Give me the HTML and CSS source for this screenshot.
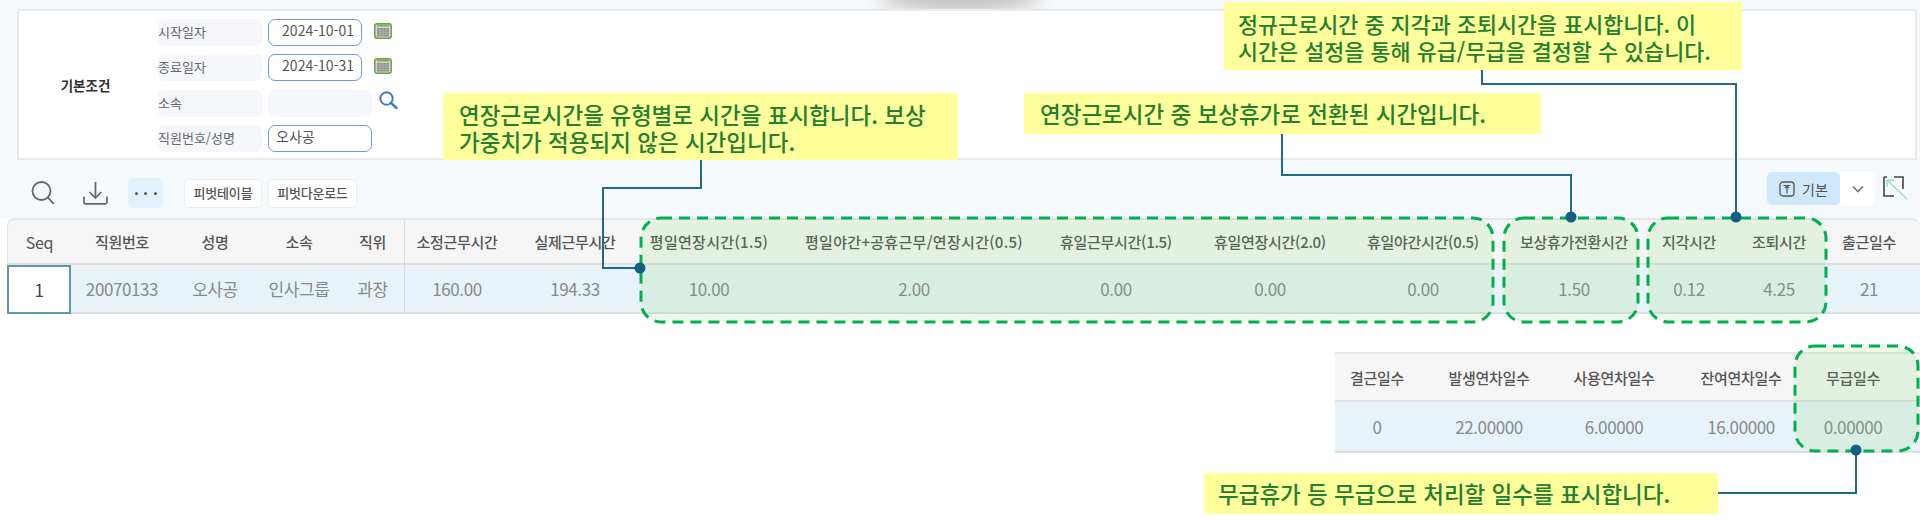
FILE: index.html
```html
<!DOCTYPE html>
<html lang="ko">
<head>
<meta charset="utf-8">
<title>근태 집계</title>
<link rel="stylesheet" href="styles.css">
</head>
<body>
<div class="page">
  <div class="top">
    <div class="top-shadow"></div>
    <section class="panel">
      <div class="panel-title">기본조건</div>
      <div class="form">
        <div class="field"><span class="label">시작일자</span><span class="input date">2024-10-01</span>
          <svg class="cal" viewBox="0 0 18 16"><rect x="0.75" y="0.75" width="16.5" height="14.5" rx="2.5" fill="#cfdcc0" stroke="#6fa04a" stroke-width="1.5"/><rect x="3" y="1.5" width="12" height="2" fill="#7fa860"/><rect x="3" y="5" width="12" height="8.5" fill="#8c8c8c"/><path d="M3 7h12M3 9.2h12M3 11.4h12M6 5v8.5M9 5v8.5M12 5v8.5" stroke="#c4c4c4" stroke-width=".6"/></svg></div>
        <div class="field"><span class="label">종료일자</span><span class="input date">2024-10-31</span>
          <svg class="cal" viewBox="0 0 18 16"><rect x="0.75" y="0.75" width="16.5" height="14.5" rx="2.5" fill="#cfdcc0" stroke="#6fa04a" stroke-width="1.5"/><rect x="3" y="1.5" width="12" height="2" fill="#7fa860"/><rect x="3" y="5" width="12" height="8.5" fill="#8c8c8c"/><path d="M3 7h12M3 9.2h12M3 11.4h12M6 5v8.5M9 5v8.5M12 5v8.5" stroke="#c4c4c4" stroke-width=".6"/></svg></div>
        <div class="field"><span class="label">소속</span><span class="input wide empty"></span>
          <svg class="find" viewBox="0 0 20 20"><circle cx="8.5" cy="8.5" r="6.2" fill="none" stroke="#3f78c9" stroke-width="2"/><path d="M13 13l5.5 5" stroke="#3f78c9" stroke-width="2.4" stroke-linecap="round"/></svg></div>
        <div class="field"><span class="label">직원번호/성명</span><span class="input wide">오사공</span></div>
      </div>
    </section>
    <div class="toolbar">
      <div class="tools">
        <svg class="tool-search" viewBox="0 0 24 24"><circle cx="10.5" cy="10" r="9" fill="none" stroke="#666" stroke-width="1.8"/><path d="M16.8 16.5l6 6.3" stroke="#666" stroke-width="1.8"/></svg>
        <svg class="tool-down" viewBox="0 0 25 24"><path d="M12.5 1v15.5M6.5 11l6 6 6-6" fill="none" stroke="#666" stroke-width="1.7"/><path d="M1 15.5V21a1.8 1.8 0 0 0 1.8 1.8h19.4A1.8 1.8 0 0 0 24 21v-5.5" fill="none" stroke="#666" stroke-width="1.7"/></svg>
        <span class="more"><i></i><i></i><i></i></span>
        <span class="btn">피벗테이블</span>
        <span class="btn second">피벗다운로드</span>
      </div>
      <div class="tools-right">
        <span class="basic"><svg viewBox="0 0 16 16"><rect x="1" y="1" width="14" height="14" rx="3" fill="none" stroke="#555" stroke-width="1.3"/><path d="M4.5 4.5h7M8 4.5v8M6 7l2-2 2 2" fill="none" stroke="#555" stroke-width="1.2"/></svg>기본</span>
        <span class="chev-box"><svg class="chev" viewBox="0 0 12 8"><path d="M1 1.5l5 5 5-5" fill="none" stroke="#777" stroke-width="1.7"/></svg></span>
        <svg class="expand" viewBox="0 0 25 24"><path d="M11 1H20V13M1 1H4M1 1V20H11" fill="none" stroke="#444" stroke-width="1.6"/><path d="M4 4l20 19M4 4v7M4 4h7" fill="none" stroke="#8fe0b8" stroke-width="1.3"/></svg>
      </div>
    </div>
  </div>
  <div class="sheet main">
    <div class="hd seq-hd">Seq</div><div class="hd">직원번호</div><div class="hd">성명</div><div class="hd">소속</div><div class="hd split">직위</div><div class="hd">소정근무시간</div><div class="hd">실제근무시간</div><div class="hd loose">평일연장시간(1.5)</div><div class="hd loose">평일야간+공휴근무/연장시간(0.5)</div><div class="hd">휴일근무시간(1.5)</div><div class="hd">휴일연장시간(2.0)</div><div class="hd">휴일야간시간(0.5)</div><div class="hd">보상휴가전환시간</div><div class="hd">지각시간</div><div class="hd">조퇴시간</div><div class="hd">출근일수</div><div class="hd end"></div>
    <div class="td seq">1</div><div class="td">20070133</div><div class="td">오사공</div><div class="td">인사그룹</div><div class="td split">과장</div><div class="td">160.00</div><div class="td">194.33</div><div class="td">10.00</div><div class="td">2.00</div><div class="td">0.00</div><div class="td">0.00</div><div class="td">0.00</div><div class="td">1.50</div><div class="td">0.12</div><div class="td">4.25</div><div class="td">21</div><div class="td"></div>
  </div>
  <div class="sheet extra">
    <div class="hd">결근일수</div><div class="hd">발생연차일수</div><div class="hd">사용연차일수</div><div class="hd">잔여연차일수</div><div class="hd">무급일수</div><div class="hd"></div>
    <div class="td">0</div><div class="td">22.00000</div><div class="td">6.00000</div><div class="td">16.00000</div><div class="td">0.00000</div><div class="td"></div>
  </div>

  <svg class="overlay" viewBox="0 0 1920 520" aria-hidden="true">
    <g class="zone">
      <rect x="641" y="218" width="852" height="104" rx="20"/>
      <rect x="1504" y="218" width="134" height="104" rx="20"/>
      <rect x="1648" y="218" width="178" height="104" rx="20"/>
      <rect x="1795" y="346" width="123" height="105" rx="20"/>
    </g>
    <g class="wire">
      <path d="M701 160V188H603V268H640"/>
      <path d="M1282 134V175H1571V217"/>
      <path d="M1482 70V84H1736V217"/>
      <path d="M1718 493H1856V450"/>
    </g>
    <g class="pin">
      <circle cx="640" cy="268" r="5.5"/>
      <circle cx="1571" cy="217" r="5.5"/>
      <circle cx="1736" cy="217" r="5.5"/>
      <circle cx="1856" cy="450" r="5.5"/>
    </g>
  </svg>

  <div class="note note-a"><p class="line">연장근로시간을 유형별로 시간을 표시합니다. 보상</p><p class="line">가중치가 적용되지 않은 시간입니다.</p></div>
  <div class="note note-b"><p class="line">연장근로시간 중 보상휴가로 전환된 시간입니다.</p></div>
  <div class="note note-c"><p class="line">정규근로시간 중 지각과 조퇴시간을 표시합니다. 이</p><p class="line">시간은 설정을 통해 유급/무급을 결정할 수 있습니다.</p></div>
  <div class="note note-d"><p class="line">무급휴가 등 무급으로 처리할 일수를 표시합니다.</p></div>
</div>
</body>
</html>
```
FILE: styles.css
```css
* { box-sizing: border-box; }
html, body { margin: 0; padding: 0; background: #fff; }
body { font-family: "Noto Sans CJK KR", "Noto Sans", sans-serif; color: #555; }
.page { position: relative; width: 1920px; height: 520px; overflow: hidden; }

.top { position: relative; height: 218px; padding: 9px 0 0 17px; background: #f6f9fc; }
.top-shadow { position: absolute; left: 880px; top: -14px; width: 160px; height: 24px; background: #bbb; filter: blur(9px); border-radius: 50%; }

.panel { position: relative; display: flex; align-items: center; height: 151px; width: 1900px; background: #fff; border: 2px solid #e9e9e9; }
.panel-title { width: 139px; padding-right: 6px; text-align: center; font-size: 13.5px; font-weight: 700; color: #333; }
.form { display: grid; row-gap: 8.3px; padding-top: 2px; }
.field { display: flex; align-items: center; height: 27px; }
.label { width: 104px; height: 27px; margin-right: 6px; background: #f5f7fb; border-radius: 6px; font-size: 13px; line-height: 26px; color: #666; }
.input { display: block; width: 94px; height: 27px; border: 1.5px solid #7396dc; border-radius: 7px; background: #fff; font-size: 14px; line-height: 21px; color: #555; padding: 0 7px; }
.date { text-align: right; }
.wide { width: 104px; }
.empty { border: 0; background: #f5f7fb; }
.cal { width: 18px; height: 16px; margin-left: 12px; margin-top: -4px; }
.find { width: 20px; height: 20px; margin-left: 6px; margin-top: -6px; }

.toolbar { display: flex; align-items: flex-start; justify-content: space-between; height: 58px; padding-top: 18px; }
.tools { display: flex; align-items: center; height: 30px; padding-left: 14px; }
.tool-search { width: 24px; height: 24px; }
.tool-down { width: 25px; height: 24px; margin-left: 28px; }
.more { display: flex; align-items: center; justify-content: center; gap: 6.5px; width: 35px; height: 30px; margin-left: 20px; background: #e2f1fb; border-radius: 5px; }
.more i { width: 3px; height: 3px; border-radius: 50%; background: #555; }
.btn { display: block; height: 29px; width: 78px; margin-left: 21px; background: #fff; border: 1px solid #eceef0; border-radius: 5px; font-size: 13px; font-weight: 500; line-height: 26px; text-align: center; color: #555; letter-spacing: -.2px; }
.btn.second { width: 89px; margin-left: 6px; }
.tools-right { display: flex; align-items: center; height: 33px; margin-top: -6px; }
.basic { display: flex; align-items: center; justify-content: center; gap: 7px; width: 73px; height: 33px; background: #cfe9fb; border-radius: 5px; font-size: 14px; color: #555; }
.basic svg { width: 16px; height: 16px; }
.chev-box { display: flex; align-items: center; justify-content: center; width: 35px; height: 33px; background: #fff; border-radius: 0 6px 6px 0; }
.chev { width: 12px; height: 8px; }
.expand { width: 25px; height: 24px; margin-left: 8px; margin-right: 12px; margin-top: -2px; }

.sheet { display: grid; grid-template-rows: 47px 49px; font-size: 15px; letter-spacing: -.3px; }
.main { grid-template-columns: 64px 102px 84px 84px 64px 104px 132px 136px 274px 130px 178px 128px 174px 56px 124px 56px 23px; margin-left: 7px; }
.extra { grid-template-columns: 84px 140px 110px 144px 80px 27px; width: 585px; margin: 38px 0 0 auto; grid-template-rows: 50px 51px; }
.hd { display: flex; align-items: center; justify-content: center; background: #f6f6f6; border-top: 2px solid #e6e6e6; border-bottom: 2px solid #e0e0e0; color: #555; font-weight: 500; white-space: nowrap; }
.td { display: flex; align-items: center; justify-content: center; background: #e8f3f9; border-bottom: 2px solid #dcdfe2; color: #888; font-size: 17px; letter-spacing: -.4px; white-space: nowrap; }
.seq-hd { border-top-left-radius: 8px; border-left: 1px solid #e6e6e6; font-size: 16px; font-weight: 400; }
.end { border-top-right-radius: 8px; }
.loose { letter-spacing: .3px; }
.split { border-right: 1px solid #d8dde0; }
.seq { background: #fff; border: 2px solid #5b9bad; color: #444; }

.overlay { position: absolute; left: 0; top: 0; width: 1920px; height: 520px; }
.zone rect { fill: #70d050; fill-opacity: .13; stroke: #00b050; stroke-width: 3; stroke-dasharray: 11 7; }
.wire path { fill: none; stroke: #1f6a8a; stroke-width: 2; }
.pin circle { fill: #125f86; }

.note { position: absolute; background: #ffff9c; color: #22802e; font-size: 22.5px; font-weight: 500; white-space: nowrap; }
.line { margin: 0; height: 27px; line-height: 27px; }
.note-a { left: 443px; top: 93px; width: 515px; height: 67px; padding: 8px 0 0 16px; }
.note-b { left: 1024px; top: 93px; width: 517px; height: 41px; padding: 7px 0 0 16px; }
.note-c { left: 1224px; top: 2px; width: 518px; height: 68px; padding: 8px 0 0 14px; font-size: 21.8px; }
.note-d { left: 1204px; top: 473px; width: 514px; height: 41px; padding: 7px 0 0 14px; }
```
